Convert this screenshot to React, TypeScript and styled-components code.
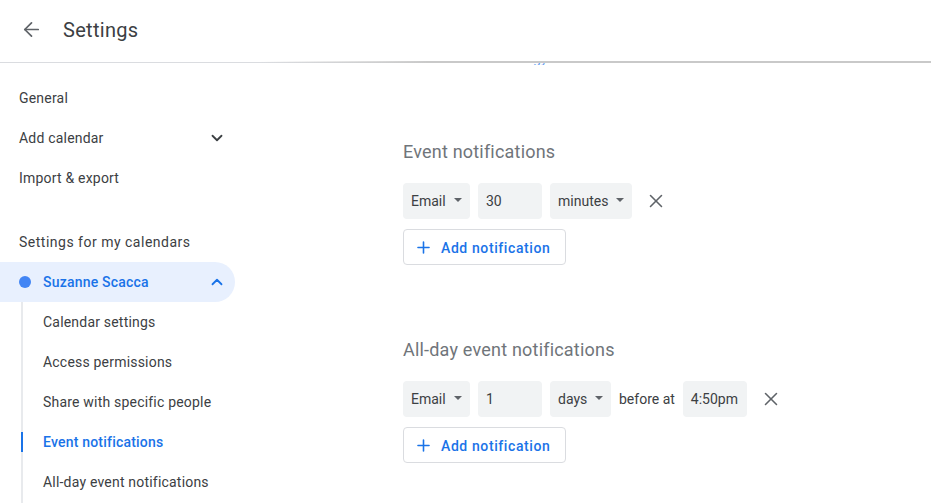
import React from 'react';
import styled, { createGlobalStyle } from 'styled-components';
import { ArrowLeft, ChevronDown, ChevronUp, Plus, X } from 'lucide-react';

const GlobalStyle = createGlobalStyle`
  html, body {
    margin: 0;
    height: 100%;
    overflow: hidden;
    background: #ffffff;
    font-family: Roboto, "Liberation Sans", sans-serif;
  }
  #root {
    height: 100%;
  }
`;

const Page = styled.div`
  display: flex;
  flex-direction: column;
  height: 100%;
`;

const Header = styled.header`
  flex: none;
  display: flex;
  align-items: center;
  gap: 20px;
  height: 59px;
  padding: 0 0 3px 20px;
  border-bottom: 1px solid #dadce0;
  position: relative;

  &::after {
    content: '';
    position: absolute;
    left: 260px;
    right: 0;
    bottom: -1px;
    height: 2px;
    background: linear-gradient(to right, rgba(200, 200, 200, 0), #c9c9c9 25%);
  }
`;

const BackButton = styled.button`
  display: flex;
  padding: 0;
  border: 0;
  background: none;
  color: #5f6368;
`;

const PageTitle = styled.h1`
  margin: 0;
  font-size: 20px;
  font-weight: 400;
  letter-spacing: 0.3px;
  color: #3c4043;
`;

const Body = styled.div`
  flex: 1;
  display: flex;
  min-height: 0;
`;

const Sidebar = styled.nav`
  flex: none;
  width: 235px;
  padding: 15px 0 0;
  overflow: hidden;
`;

const MenuItem = styled.div`
  display: flex;
  align-items: center;
  justify-content: space-between;
  height: 40px;
  padding: 0 9px 0 19px;
  font-size: 14px;
  letter-spacing: 0.2px;
  color: #3c4043;
`;

const GroupLabel = styled.div`
  margin-top: 24px;
  padding-left: 19px;
  height: 40px;
  line-height: 40px;
  font-size: 14px;
  letter-spacing: 0.5px;
  color: #3c4043;
`;

const CalendarRow = styled.div`
  display: flex;
  align-items: center;
  height: 40px;
  padding: 0 9px 0 19px;
  border-radius: 0 20px 20px 0;
  background: #e8f0fe;
  font-size: 14px;
  font-weight: 500;
  letter-spacing: 0.2px;
  color: #1a73e8;
`;

const CalendarDot = styled.span`
  width: 12px;
  height: 12px;
  margin-right: 12px;
  border-radius: 50%;
  background: #4285f4;
`;

const CalendarName = styled.span`
  flex: 1;
`;

const SubMenu = styled.div`
  margin: 10px 0 0 21px;
  padding-bottom: 20px;
  border-left: 2px solid #e8eaed;
`;

const SubItem = styled.div<{ $active?: boolean }>`
  position: relative;
  height: 40px;
  line-height: 40px;
  padding-left: 20px;
  font-size: 14px;
  font-weight: ${p => (p.$active ? 500 : 400)};
  letter-spacing: 0.2px;
  color: ${p => (p.$active ? '#1a73e8' : '#3c4043')};

  &:first-child {
    margin-top: -10px;
  }

  &::before {
    content: '';
    display: ${p => (p.$active ? 'block' : 'none')};
    position: absolute;
    left: -2px;
    top: 10px;
    width: 2px;
    height: 20px;
    background: #1a73e8;
  }
`;

const Main = styled.main`
  flex: 1;
  min-width: 0;
  padding-left: 168px;
  overflow: hidden;
`;

// tail of a line of text scrolled away under the header
const ClippedLink = styled.div`
  height: 2px;
  padding-left: 130px;
  overflow: hidden;
  font-size: 14px;
  line-height: 14px;
  color: #1a73e8;
  opacity: 0.7;

  span {
    display: block;
    margin-top: -12px;
  }
`;

const Section = styled.section`
  margin-top: 76px;

  & + & {
    margin-top: 74px;
  }
`;

const SectionTitle = styled.h2`
  margin: 0 0 20px;
  height: 22px;
  line-height: 22px;
  font-size: 18px;
  font-weight: 400;
  letter-spacing: 0.2px;
  color: #70757a;
`;

const Row = styled.div`
  display: flex;
  align-items: center;
  gap: 8px;
  height: 36px;
`;

const Field = styled.div<{ $width: number }>`
  display: flex;
  align-items: center;
  justify-content: space-between;
  box-sizing: border-box;
  width: ${p => p.$width}px;
  height: 36px;
  padding: 0 8px;
  border-radius: 4px;
  background: #f1f3f4;
  font-size: 14px;
  color: #3c4043;
`;

const Caret = styled.span`
  width: 0;
  height: 0;
  margin: 0 0 2px 4px;
  border-left: 4.5px solid transparent;
  border-right: 4.5px solid transparent;
  border-top: 4.5px solid #5f6368;
`;

const Hint = styled.span`
  font-size: 14px;
  color: #3c4043;
`;

const RemoveButton = styled.button`
  display: flex;
  margin-left: 5px;
  padding: 0;
  border: 0;
  background: none;
  color: #5f6368;
`;

const AddButton = styled.button`
  display: flex;
  align-items: center;
  gap: 8px;
  box-sizing: border-box;
  width: 163px;
  height: 36px;
  margin-top: 10px;
  padding: 1px 0 0 10px;
  border: 1px solid #dadce0;
  border-radius: 4px;
  background: #ffffff;
  font-family: inherit;
  font-size: 14px;
  font-weight: 500;
  letter-spacing: 0.6px;
  color: #1a73e8;
`;

function Select({ label, width }: { label: string; width: number }) {
  return (
    <Field $width={width}>
      {label}
      <Caret />
    </Field>
  );
}

function AddNotification() {
  return (
    <AddButton>
      <Plus size={19} strokeWidth={2} />
      Add notification
    </AddButton>
  );
}

function Remove() {
  return (
    <RemoveButton aria-label="Remove">
      <X size={22} strokeWidth={1.7} />
    </RemoveButton>
  );
}

export default function App() {
  return (
    <Page>
      <GlobalStyle />
      <Header>
        <BackButton aria-label="Back">
          <ArrowLeft size={23} strokeWidth={1.8} />
        </BackButton>
        <PageTitle>Settings</PageTitle>
      </Header>
      <Body>
        <Sidebar>
          <MenuItem>General</MenuItem>
          <MenuItem>
            Add calendar
            <ChevronDown size={18} strokeWidth={2.4} color="#3c4043" />
          </MenuItem>
          <MenuItem>Import &amp; export</MenuItem>
          <GroupLabel>Settings for my calendars</GroupLabel>
          <CalendarRow>
            <CalendarDot />
            <CalendarName>Suzanne Scacca</CalendarName>
            <ChevronUp size={18} strokeWidth={2.4} />
          </CalendarRow>
          <SubMenu>
            <SubItem>Calendar settings</SubItem>
            <SubItem>Access permissions</SubItem>
            <SubItem>Share with specific people</SubItem>
            <SubItem $active>Event notifications</SubItem>
            <SubItem>All-day event notifications</SubItem>
          </SubMenu>
        </Sidebar>
        <Main>
          <ClippedLink>
            <span>gy</span>
          </ClippedLink>
          <Section>
            <SectionTitle>Event notifications</SectionTitle>
            <Row>
              <Select label="Email" width={67} />
              <Field $width={64}>30</Field>
              <Select label="minutes" width={82} />
              <Remove />
            </Row>
            <AddNotification />
          </Section>
          <Section>
            <SectionTitle>All-day event notifications</SectionTitle>
            <Row>
              <Select label="Email" width={67} />
              <Field $width={64}>1</Field>
              <Select label="days" width={61} />
              <Hint>before at</Hint>
              <Field $width={64}>4:50pm</Field>
              <Remove />
            </Row>
            <AddNotification />
          </Section>
        </Main>
      </Body>
    </Page>
  );
}
